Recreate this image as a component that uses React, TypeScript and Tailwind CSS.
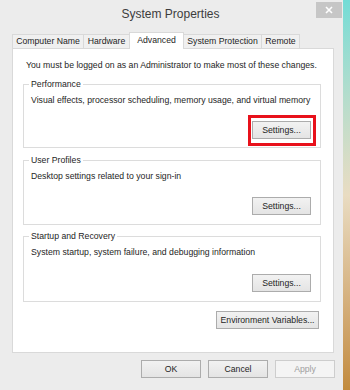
import React from 'react';

const font = { fontFamily: '"Liberation Sans", Arial, sans-serif' };

const Button = ({ label, w = 'w-[59px]', disabled = false }: { label: string; w?: string; disabled?: boolean }) => (
  <button
    className={`${w} h-[18px] border ${disabled ? 'border-[#cdcdcd] bg-[#f4f4f4] text-[#a0a0a0]' : 'border-[#acacac] bg-gradient-to-b from-[#f2f2f2] to-[#e4e4e4] text-[#1e1e1e]'} text-[8.7px] leading-[16px] flex items-center justify-center`}
  >
    {label}
  </button>
);

const Group = ({ title, desc, h, children }: { title: string; desc: string; h: string; children: React.ReactNode }) => (
  <div className={`${h} border border-[#dcdcdc] flex flex-col`}>
    <span className="-mt-[6px] ml-[5px] px-[2px] w-fit bg-white leading-[11px] block">{title}</span>
    <p className="mt-[5px] pl-[7px] leading-[11px]">{desc}</p>
    {children}
  </div>
);

const tabs = [
  { label: 'Computer Name', w: 'w-[72px]' },
  { label: 'Hardware', w: 'w-[47px]' },
  { label: 'Advanced', w: 'w-[55px]', active: true },
  { label: 'System Protection', w: 'w-[79px]' },
  { label: 'Remote', w: 'w-[39px]' },
];

export default function App() {
  return (
    <div className="w-[350px] h-[390px] flex overflow-hidden text-[#1e1e1e] text-[8.7px]" style={font}>
      <div className="w-[343px] h-full bg-[#ececec] flex flex-col">
        {/* Title bar */}
        <div className="h-[30px] flex items-start">
          <div className="w-[25px]" />
          <div className="flex-1 text-center text-[12px] text-[#3c3c3c] pt-[7px] leading-[14px]">System Properties</div>
          <div className="w-[26px] h-[16px] mt-[2px] mr-[1px] bg-[#c6c6c6] flex items-center justify-center">
            <svg width="8" height="8" viewBox="0 0 8 8">
              <path d="M1 1 L7 7 M7 1 L1 7" stroke="#ffffff" strokeWidth="1.6" />
            </svg>
          </div>
        </div>

        {/* Tabs */}
        <div className="flex items-end pl-[12px] h-[18px]">
          {tabs.map((t, i) =>
            t.active ? (
              <div
                key={t.label}
                className={`${t.w} h-[17px] -ml-[1px] -mb-[1px] relative z-10 bg-white border border-b-0 border-[#d9d9d9] flex items-center justify-center pb-[1px]`}
              >
                {t.label}
              </div>
            ) : (
              <div
                key={t.label}
                className={`${t.w} h-[14px] ${i > 0 ? '-ml-[1px]' : ''} bg-[#f0f0f0] border border-b-0 border-[#d9d9d9] flex items-center justify-center`}
              >
                {t.label}
              </div>
            )
          )}
        </div>

        {/* Tab panel */}
        <div className="ml-[12px] w-[322px] h-[305px] bg-white border border-[#d9d9d9] pl-[10px] pr-[12px] pt-[11px]">
          <p className="pl-[3px] leading-[11px]">You must be logged on as an Administrator to make most of these changes.</p>

          <div className="mt-[13px]">
            <Group title="Performance" desc="Visual effects, processor scheduling, memory usage, and virtual memory" h="h-[64px]">
              <div className="mt-auto flex justify-end pr-[4px] pb-[1px]">
                <div className="border-[3px] border-[#e8111b] pt-[3px] pb-[4px] pl-[1px] pr-[2px]">
                  <Button label="Settings..." />
                </div>
              </div>
            </Group>
          </div>

          <div className="mt-[12px]">
            <Group title="User Profiles" desc="Desktop settings related to your sign-in" h="h-[65px]">
              <div className="mt-auto flex justify-end pr-[9px] pb-[9px]">
                <Button label="Settings..." />
              </div>
            </Group>
          </div>

          <div className="mt-[11px]">
            <Group title="Startup and Recovery" desc="System startup, system failure, and debugging information" h="h-[66px]">
              <div className="mt-auto flex justify-end pr-[9px] pb-[9px]">
                <Button label="Settings..." />
              </div>
            </Group>
          </div>

          <div className="mt-[9px] flex justify-end pr-[2px]">
            <Button label="Environment Variables..." w="w-[103px]" />
          </div>
        </div>

        {/* Dialog buttons */}
        <div className="mt-[7px] flex justify-end gap-[7px] pr-[8px]">
          <Button label="OK" w="w-[60px]" />
          <Button label="Cancel" w="w-[60px]" />
          <Button label="Apply" w="w-[60px]" disabled />
        </div>
      </div>
      <div className="w-[7px] h-full bg-gradient-to-b from-[#72dcd6] via-[#e9dcc2] to-[#c28b3d]" />
    </div>
  );
}
